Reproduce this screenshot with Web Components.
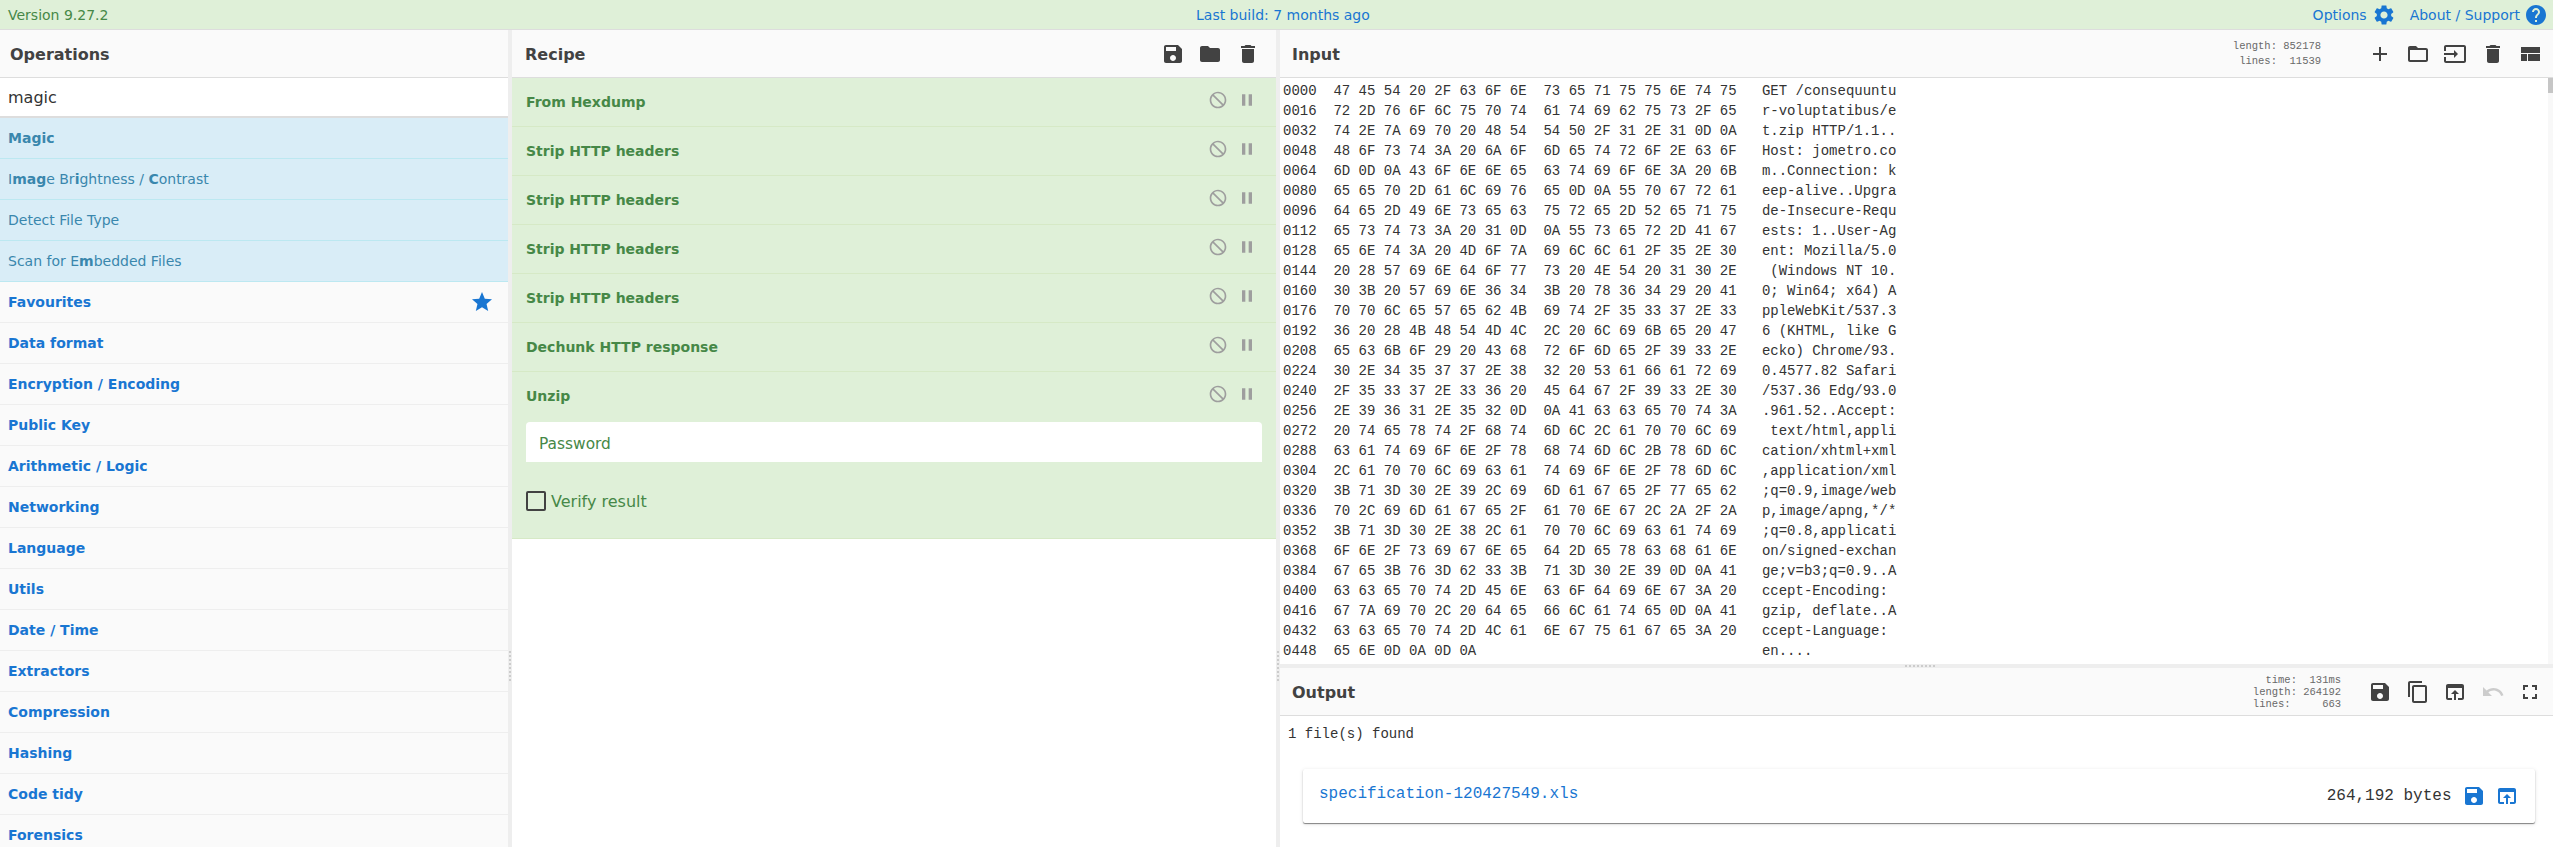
<!DOCTYPE html>
<html lang="en"><head><meta charset="utf-8"><title>CyberChef</title>
<style>
html,body{margin:0;padding:0;height:100%;overflow:hidden;background:#fff}
body{font-family:"DejaVu Sans",sans-serif}
</style></head><body>
<cc-app></cc-app>
<script>
const ICONS={
save:'M17 3H5c-1.11 0-2 .9-2 2v14c0 1.1.89 2 2 2h14c1.1 0 2-.9 2-2V7l-4-4zm-5 16c-1.66 0-3-1.34-3-3s1.34-3 3-3 3 1.34 3 3-1.34 3-3 3zm3-10H5V5h10v4z',
folder:'M10 4H4c-1.1 0-1.99.9-1.99 2L2 18c0 1.1.9 2 2 2h16c1.1 0 2-.9 2-2V8c0-1.1-.9-2-2-2h-8l-2-2z',
delete:'M6 19c0 1.1.9 2 2 2h8c1.1 0 2-.9 2-2V7H6v12zM19 4h-3.5l-1-1h-5l-1 1H5v2h14V4z',
add:'M19 13h-6v6h-2v-6H5v-2h6V5h2v6h6v2z',
folder_open:'M20 6h-8l-2-2H4c-1.1 0-1.99.9-1.99 2L2 18c0 1.1.9 2 2 2h16c1.1 0 2-.9 2-2V8c0-1.1-.9-2-2-2zm0 12H4V8h16v10z',
input:'M21 3.01H3c-1.1 0-2 .9-2 2V9h2V4.99h18v14.03H3V15H1v4.01c0 1.1.9 1.98 2 1.98h18c1.1 0 2-.88 2-1.98v-14c0-1.1-.9-2-2-2zM11 16l4-4-4-4v3H1v2h10v3z',
layout:'M3 19h6v-7H3v7zm7 0h12v-7H10v7zM3 5v6h19V5H3z',
copy:'M16 1H4c-1.1 0-2 .9-2 2v14h2V3h12V1zm3 4H8c-1.1 0-2 .9-2 2v14c0 1.1.9 2 2 2h11c1.1 0 2-.9 2-2V7c0-1.1-.9-2-2-2zm0 16H8V7h11v14z',
open:'M19 4H5c-1.11 0-2 .9-2 2v12c0 1.1.89 2 2 2h4v-2H5V8h14v10h-4v2h4c1.1 0 2-.9 2-2V6c0-1.1-.89-2-2-2zm-7 6l-4 4h3v6h2v-6h3l-4-4z',
undo:'M12.5 8c-2.65 0-5.05.99-6.9 2.6L2 7v9h9l-3.62-3.62c1.39-1.16 3.16-1.88 5.12-1.88 3.54 0 6.55 2.31 7.6 5.5l2.37-.78C21.08 11.03 17.15 8 12.5 8z',
fullscreen:'M7 14H5v5h5v-2H7v-3zm-2-4h2V7h3V5H5v5zm12 7h-3v2h5v-5h-2v3zM14 5v2h3v3h2V5h-5z',
block:'M12 2C6.48 2 2 6.48 2 12s4.48 10 10 10 10-4.48 10-10S17.52 2 12 2zm0 18c-4.42 0-8-3.58-8-8 0-1.85.63-3.55 1.69-4.9L16.9 18.31C15.55 19.37 13.85 20 12 20zm6.31-3.1L7.1 5.69C8.45 4.63 10.15 4 12 4c4.42 0 8 3.58 8 8 0 1.85-.63 3.55-1.69 4.9z',
pause:'M6 19h4V5H6v14zm8-14v14h4V5h-4z',
star:'M12 17.27L18.18 21l-1.64-7.03L22 9.24l-7.19-.61L12 2 9.19 8.63 2 9.24l5.46 4.73L5.82 21z',
settings:'M19.14 12.94c.04-.3.06-.61.06-.94 0-.32-.02-.64-.07-.94l2.03-1.58c.18-.14.23-.41.12-.61l-1.92-3.32c-.12-.22-.37-.29-.59-.22l-2.39.96c-.5-.38-1.03-.7-1.62-.94l-.36-2.54c-.04-.24-.24-.41-.48-.41h-3.84c-.24 0-.43.17-.47.41l-.36 2.54c-.59.24-1.13.57-1.62.94l-2.39-.96c-.22-.08-.47 0-.59.22L2.74 8.87c-.12.21-.08.47.12.61l2.03 1.58c-.05.3-.09.63-.09.94s.02.64.07.94l-2.03 1.58c-.18.14-.23.41-.12.61l1.92 3.32c.12.22.37.29.59.22l2.39-.96c.5.38 1.03.7 1.62.94l.36 2.54c.05.24.24.41.48.41h3.84c.24 0 .44-.17.47-.41l.36-2.54c.59-.24 1.13-.56 1.62-.94l2.39.96c.22.08.47 0 .59-.22l1.92-3.32c.12-.22.07-.47-.12-.61l-2.01-1.58zM12 15.6c-1.98 0-3.6-1.62-3.6-3.6s1.62-3.6 3.6-3.6 3.6 1.62 3.6 3.6-1.62 3.6-3.6 3.6z',
help:'M12 2C6.48 2 2 6.48 2 12s4.48 10 10 10 10-4.48 10-10S17.52 2 12 2zm1 17h-2v-2h2v2zm2.07-7.75l-.9.92C13.45 12.9 13 13.5 13 15h-2v-.5c0-1.1.45-2.1 1.17-2.83l1.24-1.26c.37-.36.59-.86.59-1.41 0-1.1-.9-2-2-2s-2 .9-2 2H8c0-2.21 1.79-4 4-4s4 1.79 4 4c0 .88-.36 1.68-.93 2.25z'
};
function def(name,html,init){
  customElements.define(name,class extends HTMLElement{
    connectedCallback(){
      if(this.shadowRoot)return;
      const r=this.attachShadow({mode:'open'});
      r.innerHTML=typeof html==='function'?html(this):html;
      if(init)init(r,this);
    }
  });
}
def('cc-icon',h=>`<style>:host{display:inline-flex;flex:none;width:var(--s,24px);height:var(--s,24px)}svg{width:100%;height:100%;fill:currentColor;display:block}</style><svg viewBox="0 0 24 24"><path d="${ICONS[h.getAttribute('name')]}"/></svg>`);

def('cc-banner',`<style>
:host{display:grid;grid-template-columns:1188px auto 1fr;align-items:center;height:29px;flex:none;border-bottom:1px solid #ddd;background:#dff0d8;color:#468847;font-size:14px;padding:0 5px 0 8px}
.m{color:#1976d2}
.r{display:flex;justify-content:flex-end;align-items:center;color:#1976d2}
.r span{margin-right:5px}
.r span:last-of-type{margin-right:4px}
.r cc-icon:first-of-type{margin-right:14px}
</style><div>Version 9.27.2</div><div class="m">Last build: 7 months ago</div>
<div class="r"><span>Options</span><cc-icon name="settings"></cc-icon><span>About / Support</span><cc-icon name="help"></cc-icon></div>`);

def('cc-head',`<style>
:host{display:flex;align-items:center;height:47px;background:#fafafa;border-bottom:1px solid #ddd;color:#424242;font-weight:700;font-size:16px;padding-left:var(--pl,12px);flex:none;position:relative}
.t{flex:1;padding-top:2px}
.s{display:flex;align-items:center}
</style><div class="t"><slot name="title"></slot></div><div class="s"><slot></slot></div>`);

def('cc-btn',`<style>:host{display:flex;width:24px;height:24px;margin-left:13.4px;color:#424242}</style><slot></slot>`);

def('cc-info',`<style>:host{display:block;font:10.5px/var(--lh,15px) "Liberation Mono",monospace;color:#696969;text-align:right;white-space:pre;font-weight:400;margin-right:var(--mr,34px)}</style><slot></slot>`);

def('cc-op',`<style>
:host{display:flex;flex:none;align-items:center;box-sizing:border-box;height:41px;padding-left:8px;font-size:14px;border-bottom:1px solid #bce8f1;background:#d9edf7;color:#3a87ad}
</style><span><slot></slot></span>`);

def('cc-cat',`<style>
:host{display:flex;flex:none;align-items:center;justify-content:space-between;box-sizing:border-box;height:41px;padding:0 14px 0 8px;font-size:14px;font-weight:700;color:#1976d2;border-bottom:1px solid #eee;background:#fafafa}
</style><slot></slot><slot name="icon"></slot>`);

def('cc-search',`<style>
:host{display:flex;align-items:center;box-sizing:border-box;height:40px;padding:0 0 0 8px;font-size:16px;color:#333;background:#fff;border-bottom:2px solid #ddd;flex:none}
</style><slot></slot>`);

def('cc-step',h=>`<style>
:host{display:block;box-sizing:border-box;min-height:49px;flex:none;background:#dff0d8;border-bottom:1px solid #d6e9c6;color:#468847;padding:0 14px}
.h{display:flex;align-items:center;height:48px;font-size:14px;font-weight:700}
.h span{flex:1}
.c{display:flex;align-items:center;margin:-4px 5px 0 0;color:#9e9e9e;--s:20px}
.c cc-icon+cc-icon{margin-left:9px}
</style><div class="h"><span>${h.getAttribute('title')}</span><div class="c"><cc-icon name="block"></cc-icon><cc-icon name="pause"></cc-icon></div></div><slot></slot>`);

def('cc-pass',`<style>
:host{display:flex;align-items:center;box-sizing:border-box;height:40px;margin-top:2px;background:#fff;border-radius:4px 4px 0 0;padding:4px 0 0 13px;font-size:15.4px;color:#468847}
</style><slot></slot>`);
def('cc-check',`<style>
:host{display:flex;align-items:center;margin-top:29px;height:20px;padding-bottom:27px;font-size:16px;color:#468847}
i{display:block;box-sizing:border-box;width:20px;height:20px;border:2px solid #424242;border-radius:2px;margin-right:5px}
</style><i></i><slot></slot>`);

def('cc-hex',`<style>:host{display:block;padding:3px 0 0 3px;font:14px/20px "Liberation Mono",monospace;color:#333;white-space:pre}</style><div id="o"></div>`,r=>{
  const s="GET /consequuntur-voluptatibus/et.zip HTTP/1.1\r\nHost: jometro.com\r\nConnection: keep-alive\r\nUpgrade-Insecure-Requests: 1\r\nUser-Agent: Mozilla/5.0 (Windows NT 10.0; Win64; x64) AppleWebKit/537.36 (KHTML, like Gecko) Chrome/93.0.4577.82 Safari/537.36 Edg/93.0.961.52\r\nAccept: text/html,application/xhtml+xml,application/xml;q=0.9,image/webp,image/apng,*/*;q=0.8,application/signed-exchange;v=b3;q=0.9\r\nAccept-Encoding: gzip, deflate\r\nAccept-Language: en\r\n\r\n";
  const L=[];
  for(let i=0;i<s.length;i+=16){
    const c=s.slice(i,i+16);
    const hx=[...c].map(x=>x.charCodeAt(0).toString(16).toUpperCase().padStart(2,'0'));
    const a=hx.slice(0,8).join(' ').padEnd(23),b=hx.slice(8).join(' ').padEnd(23);
    L.push(String(i).padStart(4,'0')+'  '+a+'  '+b+'   '+c.replace(/[\r\n]/g,'.'));
  }
  r.getElementById('o').textContent=L.join('\n');
});

def('cc-card',`<style>
:host{display:flex;align-items:center;box-sizing:border-box;height:54px;margin:25px 18px 0 23px;padding:0 16px 0 16px;background:#fff;border-radius:2px;box-shadow:0 1px 1px rgba(0,0,0,.45),0 1px 4px rgba(0,0,0,.12);font:16px "Liberation Mono",monospace;color:#333}
.f{flex:1;color:#1976d2;margin-top:-5px}
.i{display:flex;color:#1976d2;margin-left:10px}
.i cc-icon+cc-icon{margin-left:9.5px}
</style><span class="f"><slot name="file"></slot></span><slot name="size"></slot><div class="i"><cc-icon name="save"></cc-icon><cc-icon name="open"></cc-icon></div>`);

def('cc-grip',`<style>:host{position:absolute;display:block;z-index:2;pointer-events:none}</style>`);

def('cc-app',`<style>
:host{display:flex;flex-direction:column;height:847px;width:2553px;overflow:hidden;color:#333}
main{flex:1;min-height:0;display:grid;grid-template-columns:508px 4px 764px 4px 1273px}
.g{background:#eee;position:relative}
.col{display:flex;flex-direction:column;min-height:0;overflow:hidden}
.ops{background:#fafafa}
.right{display:grid;grid-template-rows:634px 4px 179px}
.pane{display:flex;flex-direction:column;min-height:0;overflow:hidden;position:relative}
.sb{position:absolute;right:0;top:48px;bottom:0;width:5px;background:#f8f8f8}
.sb i{display:block;height:15px;background:#c6c6c6}
.gv{left:1px;top:621px;width:2px;height:30px;background:repeating-linear-gradient(to bottom,#ccc 0 2px,transparent 2px 4px)}
.gh{left:625px;top:1px;width:30px;height:2px;background:repeating-linear-gradient(to right,#ccc 0 2px,transparent 2px 4px)}
.line{font:14px/20px "Liberation Mono",monospace;color:#333;padding:8px 0 0 8px}
cc-btn.off{color:#ccc}
.ops cc-head{--pl:10px}
.rec cc-head{--pl:13px}
</style>
<cc-banner></cc-banner>
<main>
<section class="col ops">
  <cc-head><span slot="title">Operations</span></cc-head>
  <cc-search>magic</cc-search>
  <cc-op><b>Magic</b></cc-op>
  <cc-op>I<b>mag</b>e Br<b>i</b>ghtness / <b>C</b>ontrast</cc-op>
  <cc-op>Detect File Type</cc-op>
  <cc-op>Scan for E<b>m</b>bedded Files</cc-op>
  <cc-cat>Favourites<cc-icon slot="icon" name="star"></cc-icon></cc-cat>
  <cc-cat>Data format</cc-cat><cc-cat>Encryption / Encoding</cc-cat><cc-cat>Public Key</cc-cat>
  <cc-cat>Arithmetic / Logic</cc-cat><cc-cat>Networking</cc-cat><cc-cat>Language</cc-cat>
  <cc-cat>Utils</cc-cat><cc-cat>Date / Time</cc-cat><cc-cat>Extractors</cc-cat>
  <cc-cat>Compression</cc-cat><cc-cat>Hashing</cc-cat><cc-cat>Code tidy</cc-cat><cc-cat>Forensics</cc-cat>
</section>
<div class="g"><cc-grip class="gv"></cc-grip></div>
<section class="col rec">
  <cc-head><span slot="title">Recipe</span>
    <cc-btn><cc-icon name="save"></cc-icon></cc-btn><cc-btn><cc-icon name="folder"></cc-icon></cc-btn><cc-btn style="margin-right:16.5px"><cc-icon name="delete"></cc-icon></cc-btn>
  </cc-head>
  <cc-step title="From Hexdump"></cc-step>
  <cc-step title="Strip HTTP headers"></cc-step>
  <cc-step title="Strip HTTP headers"></cc-step>
  <cc-step title="Strip HTTP headers"></cc-step>
  <cc-step title="Strip HTTP headers"></cc-step>
  <cc-step title="Dechunk HTTP response"></cc-step>
  <cc-step title="Unzip"><cc-pass>Password</cc-pass><cc-check>Verify result</cc-check></cc-step>
</section>
<div class="g"><cc-grip class="gv"></cc-grip></div>
<section class="right">
  <div class="pane">
    <cc-head><span slot="title">Input</span>
      <cc-info>length: 852178
lines:  11539</cc-info>
      <cc-btn><cc-icon name="add"></cc-icon></cc-btn><cc-btn><cc-icon name="folder_open"></cc-icon></cc-btn><cc-btn><cc-icon name="input"></cc-icon></cc-btn><cc-btn><cc-icon name="delete"></cc-icon></cc-btn><cc-btn style="margin-right:11px"><cc-icon name="layout"></cc-icon></cc-btn>
    </cc-head>
    <cc-hex></cc-hex>
    <div class="sb"><i></i></div>
  </div>
  <div class="g"><cc-grip class="gh"></cc-grip></div>
  <div class="pane">
    <cc-head><span slot="title">Output</span>
      <cc-info style="--lh:12px;--mr:14px">time:  131ms
length: 264192
lines:     663</cc-info>
      <cc-btn><cc-icon name="save"></cc-icon></cc-btn><cc-btn><cc-icon name="copy"></cc-icon></cc-btn><cc-btn><cc-icon name="open"></cc-icon></cc-btn><cc-btn class="off"><cc-icon name="undo"></cc-icon></cc-btn><cc-btn style="margin-right:11px"><cc-icon name="fullscreen"></cc-icon></cc-btn>
    </cc-head>
    <div class="line">1 file(s) found</div>
    <cc-card><span slot="file">specification-120427549.xls</span><span slot="size">264,192 bytes</span></cc-card>
  </div>
</section>
</main>`);
</script>
</body></html>
